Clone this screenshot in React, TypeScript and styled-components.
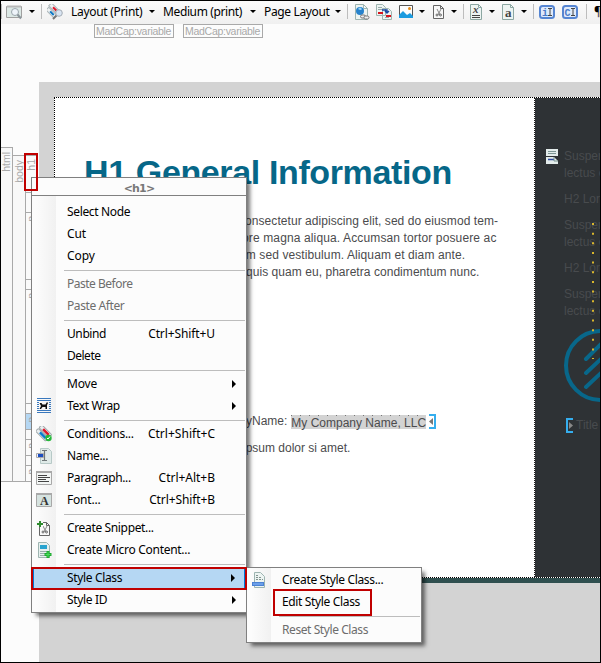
import React from "react";
import styled, { createGlobalStyle, css } from "styled-components";

const Global = createGlobalStyle`
  * { box-sizing: border-box; }
  html, body { margin: 0; padding: 0; overflow: hidden; }
  p, h1 { margin: 0; }
  svg { display: block; }
`;

const ui = css`
  font-family: "Noto Sans", "Open Sans", sans-serif;
  font-size: 12px;
`;

const Window = styled.div`
  position: relative;
  width: 601px;
  height: 663px;
  overflow: hidden;
  border: 1px solid #000;
  background: #fcfcfc;
  display: flex;
  flex-direction: column;
`;

/* ---------- toolbar ---------- */
const Toolbar = styled.div`
  ${ui}
  flex: none;
  height: 23px;
  width: 599px;
  padding-bottom: 2px;
  overflow: hidden;
  display: flex;
  align-items: center;
  background: linear-gradient(#fbfbfb, #f0f0f0);
`;
const Slot = styled.div<{ $w: number }>`
  flex: none;
  width: ${(p) => p.$w}px;
  height: 20px;
  display: flex;
  align-items: center;
  white-space: nowrap;
`;
const ToolLabel = styled(Slot)<{ $ls?: number }>`
  color: #000;
  letter-spacing: ${(p) => p.$ls ?? -0.3}px;
`;
const Divider = styled.div<{ $after: number }>`
  flex: none;
  width: 1px;
  height: 15px;
  background: #bdbdbd;
  margin-right: ${(p) => p.$after}px;
`;
const Caret = styled.div<{ $after: number }>`
  flex: none;
  border: 3px solid transparent;
  border-top-color: #000;
  border-bottom: 0;
  margin-right: ${(p) => p.$after}px;
`;

/* ---------- variable strip ---------- */
const VariableStrip = styled.div`
  flex: none;
  height: 58px;
  padding-left: 93px;
  display: flex;
  gap: 9px;
`;
const VariableTag = styled.div`
  width: 80px;
  height: 14px;
  border: 1px solid #a9a9a9;
  padding-left: 1px;
  font: 10.5px/12px "Liberation Sans", sans-serif;
  letter-spacing: -0.28px;
  color: #a9a9a9;
  white-space: nowrap;
`;

/* ---------- editor body ---------- */
const Editor = styled.div`
  flex: 1;
  display: flex;
`;
const Gutter = styled.div`
  flex: none;
  width: 38px;
  height: 400px;
  padding-top: 65px;
  display: flex;
`;
const StructureColumn = styled.div<{ $w: number; $top: number }>`
  width: ${(p) => p.$w}px;
  margin-top: ${(p) => p.$top}px;
  border: 1px solid #a9a9a9;
  border-left: 0;
  background: #f8f8f8;
  padding-top: 4px;
  display: flex;
  flex-direction: column;
  align-items: center;
`;
const BlockColumn = styled.div`
  width: 12px;
  margin-top: 8px;
  display: flex;
  flex-direction: column;
  border-bottom: 1px solid #a9a9a9;
`;
const Block = styled.div<{ $h: number; $active?: boolean }>`
  flex: none;
  height: ${(p) => p.$h}px;
  border-top: 1px solid #a9a9a9;
  padding: 3px 0 0 0;
  background: ${(p) => (p.$active ? "#b5d7f3" : "#fafafa")};
`;
const Vertical = styled.span`
  display: block;
  writing-mode: vertical-rl;
  transform: rotate(180deg);
  font: 10.5px/11px "Liberation Sans", sans-serif;
  color: #a9a9a9;
  white-space: nowrap;
`;

const Canvas = styled.div`
  width: 561px;
  background: #d3d3d3;
  padding: 15px 0 0 15px;
`;
const Paper = styled.div`
  height: 486px;
  border-bottom: 5px solid #2f4f4f;
  display: grid;
  grid-template-columns: 480px 66px;
  grid-template-rows: 1px 479px 1px;
`;
const DottedRow = styled.div`
  grid-column: 1 / 3;
  background: repeating-linear-gradient(90deg, #000 0 1px, #fff 1px 2px);
`;
const Sheet = styled.div`
  background:
    repeating-linear-gradient(#000 0 1px, #fff 1px 2px) left / 1px 100% no-repeat,
    #fff;
  padding: 54px 0 0 30px;
  overflow: hidden;
`;
const Heading = styled.h1`
  font: bold 34px/40px "Liberation Sans", Arial, sans-serif;
  letter-spacing: -0.37px;
  color: #066788;
  white-space: nowrap;
`;
const bodyText = css`
  font: 12px/17px "Liberation Sans", Arial, sans-serif;
  color: #4b4b4d;
  white-space: nowrap;
`;
const Line = styled.p<{ $x: number; $top?: number; $ls?: number }>`
  ${bodyText}
  padding-left: ${(p) => p.$x}px;
  margin-top: ${(p) => p.$top ?? 0}px;
  letter-spacing: ${(p) => p.$ls ?? 0}px;
  display: flex;
  align-items: center;
`;
const Variable = styled.span`
  margin-left: 4px;
  height: 14px;
  line-height: 16px;
  background:
    repeating-linear-gradient(90deg, #777 0 1px, transparent 1px 9px) top / 100% 1px no-repeat,
    #d3d3d3;
`;
const Marker = styled.svg`
  margin-left: 3px;
`;

const SidePage = styled.div`
  background:
    repeating-linear-gradient(#222 0 1px, #fff 1px 2px) left / 1px 100% no-repeat,
    #2e3235;
  padding: 50px 0 0 12px;
  overflow: hidden;
  display: grid;
  grid-template-columns: 18px 36px;
  align-content: start;
  position: relative;
`;
const SideText = styled.div`
  ${bodyText}
  color: #484b4e;
`;
const SideLine = styled.p<{ $gap?: boolean }>`
  margin-bottom: ${(p) => (p.$gap ? 9 : 0)}px;
`;
const Logo = styled.svg`
  margin-top: 0px;
`;
const TitleRow = styled.div`
  ${bodyText}
  grid-column: 1 / 3;
  color: #484b4e;
  padding-left: 20px;
  margin-top: 7px;
  display: flex;
  align-items: center;
  gap: 3px;
`;
const Leader = styled.svg`
  position: absolute;
  left: 57px;
  top: 123px;
`;

/* ---------- menus ---------- */
const Menu = styled.div<{ $x: number; $y: number; $w: number; $h: number }>`
  ${ui}
  position: absolute;
  left: ${(p) => p.$x - 1}px;
  top: ${(p) => p.$y - 1}px;
  width: ${(p) => p.$w}px;
  height: ${(p) => p.$h}px;
  border: 1px solid #808080;
  background: #fcfcfc;
  box-shadow: 4px 4px 4px -1px rgba(0, 0, 0, 0.55);
`;
const MenuTitle = styled.div`
  height: 18px;
  border-bottom: 1px solid #808080;
  font: bold 11px/21px "DejaVu Sans", sans-serif;
  letter-spacing: -0.8px;
  color: #787878;
  text-align: center;
`;
const MenuBody = styled.div<{ $pad: number }>`
  padding-top: ${(p) => p.$pad}px;
  padding-bottom: 1px;
  background: linear-gradient(90deg, #fcfcfc 4px, #f1f1f1 24px, #fcfcfc 24px);
`;
const Row = styled.div<{ $disabled?: boolean; $active?: boolean }>`
  height: 22px;
  display: grid;
  grid-template-columns: 35px 1fr auto 31px;
  align-items: center;
  white-space: nowrap;
  color: ${(p) => (p.$disabled ? "#6d6d6d" : "#000")};
  ${(p) =>
    p.$active &&
    css`
      background: #b5d7f3;
      margin: 0 1px;
      box-shadow: inset 1px 0 #0078d7, inset -1px 0 #0078d7;
      grid-template-columns: 34px 1fr auto 30px;
    `}
`;
const IconCell = styled.div`
  padding-left: 4px;
`;
const Label = styled.span<{ $ls?: number }>`
  padding-bottom: 2px;
  letter-spacing: ${(p) => p.$ls ?? -0.35}px;
`;
const Rule = styled.div`
  height: 6px;
  margin: 0 1px 0 32px;
  background: linear-gradient(#bdbdbd, #bdbdbd) 0 3px / 100% 1px no-repeat;
`;
const Arrow = styled.div`
  justify-self: end;
  border: 4px solid transparent;
  border-left-color: #000;
  border-right: 0;
  margin-right: 10px;
  grid-column: 4;
`;
const Callout = styled.div<{ $x: number; $y: number; $w: number; $h: number }>`
  position: absolute;
  left: ${(p) => p.$x - 1}px;
  top: ${(p) => p.$y - 1}px;
  width: ${(p) => p.$w}px;
  height: ${(p) => p.$h}px;
  border: 2px solid #c00000;
`;

/* ---------- icons ---------- */
const Svg = ({ children, w = 16, h = 16 }: { children: React.ReactNode; w?: number; h?: number }) => (
  <svg width={w} height={h} viewBox={`0 0 ${w} ${h}`}>{children}</svg>
);
const Doc = () => (
  <path d="M1.500 .5h8l4 4v11h-12zM9.500 .5v4h4" fill="#edf4f2" stroke="#9eb5b1" />
);
const PreviewIcon = () => (
  <Svg>
    <path d="M.5 2.500h15v11H.5z" fill="#dce8e5" stroke="#a0a0a0" />
    <path d="M1 1.500h14v2H1z" fill="#b8b8b8" />
    <circle cx="9" cy="8" r="3.500" fill="#eef4fa" stroke="#9ba6ad" />
    <path d="m11.500 10.500 3.500 4" stroke="#8b959b" strokeWidth="2" />
  </Svg>
);
const TagViewIcon = () => (
  <Svg>
    <g transform="rotate(45 6 6)">
      <rect x="0" y="2" width="11" height="4" fill="#eff2f3" stroke="#adb7ba" />
      <rect x="4" y="3" width="5" height="2" fill="#e0182d" />
      <rect x="1" y="7" width="11" height="4" fill="#eff2f3" stroke="#adb7ba" />
      <rect x="5" y="8" width="5" height="2" fill="#0874c4" />
    </g>
    <path d="m10 11-4 4" stroke="#777" strokeWidth="2" />
    <circle cx="12" cy="9" r="3.300" fill="#d9e5f3" stroke="#a3acb4" />
  </Svg>
);
const ConditionsIcon = () => (
  <Svg>
    <g transform="rotate(45 8 8)">
      <rect x="0" y="3" width="14" height="4" rx="1" fill="#e9eef0" stroke="#a0a8aa" />
      <rect x="4" y="4" width="8" height="2.500" fill="#e0182d" />
      <rect x="0" y="8" width="14" height="4" rx="1" fill="#e9eef0" stroke="#a0a8aa" />
      <rect x="4" y="8.500" width="8" height="2.500" fill="#087bd0" />
    </g>
    <circle cx="12.500" cy="12" r="3.200" fill="#25b83b" />
    <path d="m11 12 1 1 2-2.500" stroke="#fff" fill="none" />
  </Svg>
);
const LinkIcon = () => (
  <Svg>
    <Doc />
    <circle cx="6" cy="7" r="4" fill="#2682cc" />
    <path d="M4 5q2-3 4 0-1 2-4 0" fill="#9cd4f5" />
    <g fill="#eee" stroke="#777" strokeWidth="1">
      <rect x="6.500" y="11" width="5" height="3" rx="1.500" />
      <rect x="10" y="12" width="5" height="3" rx="1.500" />
    </g>
  </Svg>
);
const CrossRefIcon = () => (
  <Svg>
    <path d="M.5.5h6l3 3v8h-9zM6.500 4.500h6l3 3v8h-9z" fill="#edf4f2" stroke="#9eb5b1" />
    <path d="M2 3.500h4M2 5.500h4M9 13.500h4" stroke="#9aa" />
    <path d="M2 9h5M10 12h5" stroke="#d6131c" strokeWidth="2" />
    <path d="M6 6h5v3M9 7l2 2 2-2" stroke="#1746a2" strokeWidth="1.400" fill="none" />
  </Svg>
);
const ImageIcon = () => (
  <Svg w={14}>
    <path d="M.5 1.500h13v12H.5z" fill="#fdfdfd" stroke="#555" />
    <path d="M0 14V11l4-4 4 4 3-2 3 3v2z" fill="#1b9be0" />
    <circle cx="10.500" cy="4.500" r="1.500" fill="#e58a16" />
  </Svg>
);
const Snip = () => (
  <>
    <path d="M.5 1.500h7l3 3v10H.5z" fill="#f8f8f8" stroke="#666" />
    <path d="M7.500 1.500v3h3" fill="none" stroke="#666" />
    <path d="m4 5 3 6M8 5l-3 6" stroke="#888" strokeWidth="1" />
    <g fill="none" stroke="#666"><circle cx="4" cy="11" r="1" /><circle cx="7.500" cy="11" r="1" /></g>
  </>
);
const SnippetIcon = () => <Svg w={12}><Snip /></Svg>;
const LetterIcon = ({ letter, under }: { letter: string; under?: boolean }) => (
  <Svg w={14}>
    <path d="M.5 .5h8l3 3v12H.5zM8.500 .5v3h3" fill="#edf4f2" stroke="#8ca7a2" />
    <text x="3" y={under ? 9 : 13} fontFamily="Liberation Serif" fontStyle={under ? "italic" : "normal"} fontWeight="bold" fontSize={under ? 11 : 13} fill="#444">{letter}</text>
    {under && <path d="M2 11.500h8M2 13.500h8" stroke="#444" />}
  </Svg>
);
const IndexIcon = ({ letter }: { letter: string }) => (
  <Svg>
    <rect x="1" y="2" width="14" height="12" rx="2.500" fill="#dfeafa" stroke="#5585d2" strokeWidth="2" />
    <text x={letter === "i" ? 3 : 2.500} y="11.500" fontFamily="Liberation Mono" fontWeight="bold" fontSize="10" fill="#4a7ac8">{letter}</text>
    <path d="M9 4.500h4M9 11.500h4M11 4.500v7" stroke="#444" />
  </Svg>
);
const WrapIcon = () => (
  <Svg>
    <path d="M1 .5h14M1 2.500h14M1 12.500h14M1 14.500h14M1 4.500h2M1 6.500h2M1 8.500h2M1 10.500h2M13 4.500h2M13 6.500h2M13 8.500h2M13 10.500h2" stroke="#3a78bd" />
    <path d="M3.500 5h2l1 1.500h3L11 4l1 1-1 2v4h-1.500V9h-3L5 11H3.500L5 8z" fill="#111" />
  </Svg>
);
const NameIcon = () => (
  <Svg>
    <path d="M4.500 .5h8l3 3v12h-11z" fill="#dfeae8" stroke="#b7c9c7" />
    <path d="M.5 5.500h7v4h-7z" fill="#eef" stroke="#aaa" />
    <path d="M2 6h5v3H2z" fill="#1b4fc0" />
    <path d="M6 2.500h5M6 12.500h5M8.500 2.500v10" stroke="#6f7779" strokeWidth="1.200" />
  </Svg>
);
const PanelIcon = ({ letter }: { letter?: string }) => (
  <Svg>
    <path d="M.5 1.500h15v13H.5z" fill="#f3f6f5" stroke="#a8a8a8" />
    <path d="M0 1h16v2H0z" fill="#a9a9a9" />
    {letter ? (
      <>
        <path d="M1 3h14v11H1z" fill="#d6e3e0" />
        <text x="4" y="13" fontFamily="Liberation Serif" fontWeight="bold" fontSize="12" fill="#333">{letter}</text>
      </>
    ) : (
      <path d="M2 5.500h9M2 7.500h12M2 9.500h8M2 11.500h11" stroke="#444" />
    )}
  </Svg>
);
const CreateSnippetIcon = () => (
  <Svg>
    <g transform="translate(3 1)"><Snip /></g>
    <path d="M0 0h7v7H0z" fill="#f8f8f8" />
    <path d="M4 1v6M1 4h6" stroke="#2e8b2e" strokeWidth="2" />
  </Svg>
);
const MicroIcon = () => (
  <Svg>
    <path d="M2.500.5h8l3 3v12h-11z" fill="#e7f0ee" stroke="#9eb5b1" />
    <path d="M4 3h7v4H4z" fill="#27a3cf" />
    <path d="M4 9.500h7M4 11.500h7M4 13.500h5" stroke="#9aacaa" />
    <path d="M12 9v7M8.500 12.500h7" stroke="#1faa32" strokeWidth="3" />
    <path d="M12 10v5M9.500 12.500h5" stroke="#48dc58" />
  </Svg>
);
const StyleClassIcon = () => (
  <Svg>
    <path d="M3.500.5h6l4 4v11h-10z" fill="#edf4f2" stroke="#9eb5b1" />
    <path d="M5 3.500h3M5 5.500h6M5 7.500h7" stroke="#82938f" strokeDasharray="2 1" />
    <rect x="1.500" y="10.500" width="11" height="3" fill="#6c9fe8" stroke="#4b82d4" />
  </Svg>
);

type Item =
  | "-"
  | { label: string; ls?: number; keys?: string; kls?: number; icon?: React.ReactNode; sub?: boolean; off?: boolean; active?: boolean };

const mainItems: Item[] = [
  { label: "Select Node" },
  { label: "Cut", ls: -0.1 },
  { label: "Copy", ls: -0.1 },
  "-",
  { label: "Paste Before", ls: -0.5, off: true },
  { label: "Paste After", off: true, ls: -0.4 },
  "-",
  { label: "Unbind", ls: -0.4, keys: "Ctrl+Shift+U", kls: -0.1 },
  { label: "Delete", ls: -0.5 },
  "-",
  { label: "Move", ls: -0.2, sub: true },
  { label: "Text Wrap", sub: true, icon: <WrapIcon /> },
  "-",
  { label: "Conditions...", ls: -0.27, keys: "Ctrl+Shift+C", kls: 0.02, icon: <ConditionsIcon /> },
  { label: "Name...", icon: <NameIcon /> },
  { label: "Paragraph...", ls: -0.42, keys: "Ctrl+Alt+B", kls: -0.02, icon: <PanelIcon /> },
  { label: "Font...", ls: -0.2, keys: "Ctrl+Shift+B", kls: -0.1, icon: <PanelIcon letter="A" /> },
  "-",
  { label: "Create Snippet...", icon: <CreateSnippetIcon /> },
  { label: "Create Micro Content...", ls: -0.28, icon: <MicroIcon /> },
  "-",
  { label: "Style Class", sub: true, active: true },
  { label: "Style ID", sub: true },
];
const subItems: Item[] = [
  { label: "Create Style Class...", icon: <StyleClassIcon /> },
  { label: "Edit Style Class" },
  "-",
  { label: "Reset Style Class", ls: -0.42, off: true },
];

const Items = ({ items }: { items: Item[] }) => (
  <>
    {items.map((it, i) =>
      it === "-" ? (
        <Rule key={i} />
      ) : (
        <Row key={i} $disabled={it.off} $active={it.active}>
          <IconCell>{it.icon}</IconCell>
          <Label $ls={it.ls}>{it.label}</Label>
          <Label $ls={it.kls}>{it.keys}</Label>
          {it.sub && <Arrow />}
        </Row>
      ),
    )}
  </>
);

export default function App() {
  return (
    <Window>
      <Global />
      <Toolbar>
        <Divider $after={4} />
        <Slot $w={23}><PreviewIcon /></Slot>
        <Caret $after={6} />
        <Divider $after={5} />
        <Slot $w={24}><TagViewIcon /></Slot>
        <ToolLabel $w={78}>Layout (Print)</ToolLabel>
        <Caret $after={8} />
        <ToolLabel $w={87} $ls={-0.38}>Medium (print)</ToolLabel>
        <Caret $after={8} />
        <ToolLabel $w={71} $ls={-0.36}>Page Layout</ToolLabel>
        <Caret $after={6} />
        <Divider $after={6} />
        <Slot $w={22}><LinkIcon /></Slot>
        <Slot $w={23}><CrossRefIcon /></Slot>
        <Slot $w={20}><ImageIcon /></Slot>
        <Caret $after={8} />
        <Slot $w={18}><SnippetIcon /></Slot>
        <Caret $after={6} />
        <Divider $after={6} />
        <Slot $w={19}><LetterIcon letter="x" under /></Slot>
        <Caret $after={7} />
        <Slot $w={19}><LetterIcon letter="a" /></Slot>
        <Caret $after={6} />
        <Divider $after={5} />
        <Slot $w={23}><IndexIcon letter="i" /></Slot>
        <Slot $w={24}><IndexIcon letter="C" /></Slot>
        <Divider $after={7} />
        <Slot $w={8}>¶</Slot>
      </Toolbar>
      <VariableStrip>
        <VariableTag>MadCap:variable</VariableTag>
        <VariableTag>MadCap:variable</VariableTag>
      </VariableStrip>
      <Editor>
        <Gutter>
          <StructureColumn $w={12} $top={0}><Vertical>html</Vertical></StructureColumn>
          <StructureColumn $w={13} $top={8}><Vertical>body</Vertical></StructureColumn>
          <BlockColumn>
            <Block $h={37}><Vertical>h1</Vertical></Block>
            <Block $h={20} />
            <Block $h={67}><Vertical>p</Vertical></Block>
            <Block $h={10} />
            <Block $h={114}><Vertical>p</Vertical></Block>
            <Block $h={10} />
            <Block $h={16} $active><Vertical>p</Vertical></Block>
            <Block $h={10} />
            <Block $h={16}><Vertical>p</Vertical></Block>
            <Block $h={10} />
            <Block $h={15}><Vertical>p</Vertical></Block>
          </BlockColumn>
        </Gutter>
        <Canvas>
          <Paper>
            <DottedRow />
            <Sheet>
              <Heading>H1 General Information</Heading>
              <Line $x={155} $top={21} $ls={0.06}>consectetur adipiscing elit, sed do eiusmod tem-</Line>
              <Line $x={158} $ls={0.13}>ore magna aliqua. Accumsan tortor posuere ac</Line>
              <Line $x={155} $ls={0.1}>am sed vestibulum. Aliquam et diam ante.</Line>
              <Line $x={162} $ls={0.05}>quis quam eu, pharetra condimentum nunc.</Line>
              <Line $x={162} $top={132}>
                yName: <Variable>My Company Name, LLC</Variable>
                <Marker width="8" height="15">
                  <path d="M0 1h6v13H0" fill="none" stroke="#35aeee" strokeWidth="2" />
                  <path d="M0 7.500 4 4v7z" fill="#777" />
                </Marker>
              </Line>
              <Line $x={159} $top={10}>ipsum dolor si amet.</Line>
            </Sheet>
            <SidePage>
              <svg width="13" height="16">
                <path d="M0 1h12v7H0zM0 9h8l4 4v3H0z" fill="#e3eceb" />
                <path d="M2 3.500h8M2 5.500h8" stroke="#7d9694" />
                <path d="M2 11.500h6" stroke="#2c4ba0" strokeWidth="1.500" />
                <path d="M8 9v4h4" fill="none" stroke="#75908d" />
              </svg>
              <SideText>
                <SideLine>Suspendisse</SideLine>
                <SideLine $gap>lectus et</SideLine>
                <SideLine $gap>H2 Lorem</SideLine>
                <SideLine>Suspendisse</SideLine>
                <SideLine $gap>lectus et</SideLine>
                <SideLine $gap>H2 Lorem</SideLine>
                <SideLine>Suspendisse</SideLine>
                <SideLine>lectus et</SideLine>
                <Logo width="74" height="90" viewBox="0 0 74 90">
                  <g fill="none" stroke="#08678a" strokeWidth="4" strokeLinecap="round">
                    <circle cx="36.500" cy="45.500" r="34.500" />
                    <path d="M22 39 38 23M22 53 38 38M22 67 38 52M38 23v60" />
                  </g>
                </Logo>
              </SideText>
              <TitleRow>
                <svg width="7" height="15">
                  <path d="M7 1H1v13h6" fill="none" stroke="#35aeee" strokeWidth="2" />
                  <path d="M7 7.500 3 4v7z" fill="#888" />
                </svg>
                Title
              </TitleRow>
              <Leader width="4" height="140">
                <path d="M2 2V138" stroke="#d9b62c" strokeWidth="2" strokeDasharray="2 7.650" />
              </Leader>
            </SidePage>
            <DottedRow />
          </Paper>
        </Canvas>
      </Editor>

      <Menu $x={31} $y={177} $w={216} $h={436}>
        <MenuTitle>&lt;h1&gt;</MenuTitle>
        <MenuBody $pad={5}><Items items={mainItems} /></MenuBody>
      </Menu>
      <Menu $x={246} $y={567} $w={176} $h={76}>
        <MenuBody $pad={1}><Items items={subItems} /></MenuBody>
      </Menu>
      <Callout $x={24} $y={153} $w={14} $h={38} />
      <Callout $x={31} $y={567} $w={216} $h={23} />
      <Callout $x={273} $y={589} $w={99} $h={27} />
    </Window>
  );
}
